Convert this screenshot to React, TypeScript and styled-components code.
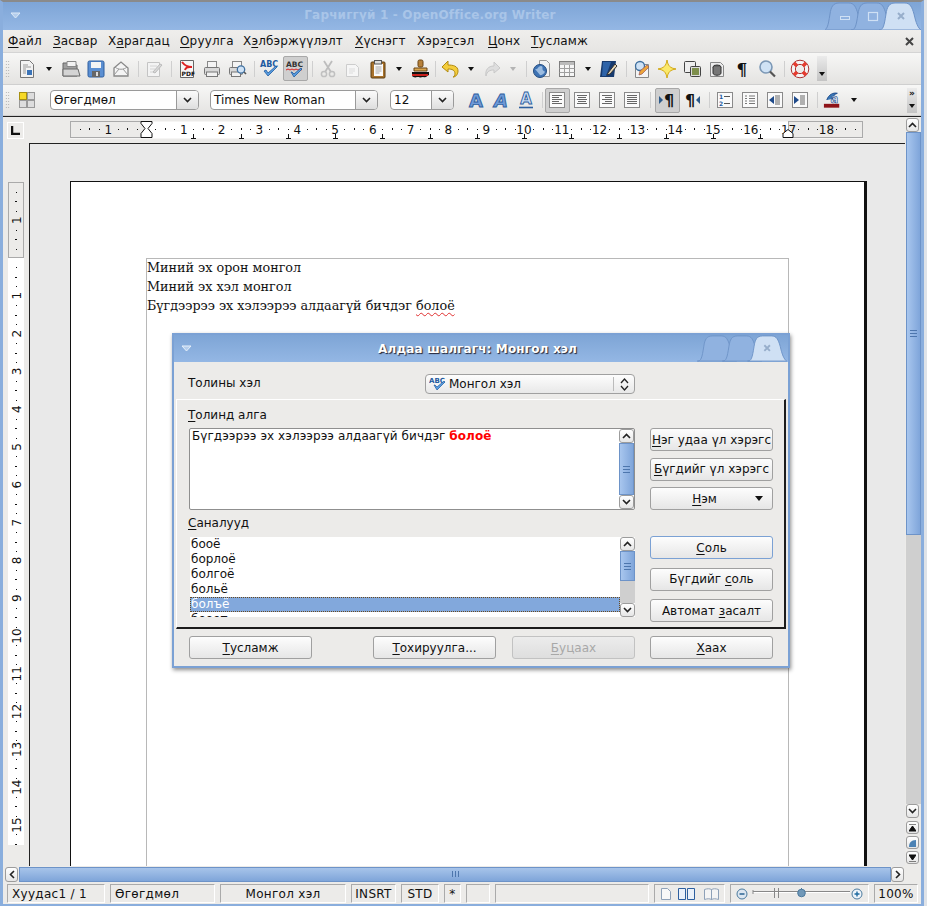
import React from "react";
import styled, { createGlobalStyle } from "styled-components";

const UI = `"DejaVu Sans", Verdana, sans-serif`;

const Global = createGlobalStyle`
    html, body { margin: 0; padding: 0; background: #dfe3e8; }
    #root { width: 927px; height: 906px; overflow: hidden; }
`;

const Screen = styled.div`
    position: relative;
    width: 924px;
    height: 906px;
    box-sizing: border-box;
    border-top: 2px solid #8a8a8a;
    border-left: 3px solid #8aaedd;
    border-right: 3px solid #8aaedd;
    border-bottom: 2px solid #8aaedd;
    display: flex;
    flex-direction: column;
    font-family: ${UI};
    font-size: 12px;
    color: #111;
    background: #ecebe9;
    overflow: visible;
`;

const TitleBar = styled.div<{ $h: number }>`
    position: relative;
    flex: none;
    height: ${p => p.$h}px;
    background: linear-gradient(#7ea5d6, #94b7e4);
    display: flex;
    align-items: center;
    justify-content: center;
`;

const TitleText = styled.div`
    font-size: 12px;
    font-weight: bold;
    color: #a9c5e8;
    letter-spacing: 0.17px;
    margin-right: 64px;
    margin-bottom: 2px;
`;

const DialogTitleText = styled.div`
    font-size: 12px;
    font-weight: bold;
    color: #fff;
    text-shadow: 1px 1px 1px #223;
    letter-spacing: 0.15px;
    margin-right: 7px;
`;

const TitleMenu = styled.svg`
    position: absolute;
    left: 7px;
    top: 10px;
`;

const TitleTabs = styled.svg`
    position: absolute;
    right: 0;
    bottom: 0;
`;

const MenuBar = styled.div`
    flex: none;
    height: 23px;
    display: flex;
    align-items: center;
    padding-left: 5px;
    position: relative;
    background: linear-gradient(#efeeec, #e6e5e3);
    border-bottom: 1px solid #d4d4d4;
    box-sizing: border-box;
`;

const MenuItem = styled.span<{ $w: number }>`
    width: ${p => p.$w}px;
    white-space: nowrap;
    font-size: 12px;
    letter-spacing: 0.15px;
`;

const Key = styled.span`
    text-decoration: underline;
    text-underline-offset: 2px;
    text-decoration-thickness: 1px;
`;

const MenuClose = styled.svg`
    position: absolute;
    right: 7px;
    top: 7px;
`;

const Toolbar = styled.div<{ $h: number }>`
    position: relative;
    flex: none;
    height: ${p => p.$h}px;
    display: flex;
    align-items: center;
    box-sizing: border-box;
    background: linear-gradient(#f7f7f6, #e4e3e1);
    border-bottom: 1px solid #cfcfcf;
`;

const Grip = styled.div`
    width: 5px;
    height: 18px;
    margin: 0 4.5px 0 2px;
    flex: none;
    background-image: radial-gradient(#a8a8a8 0.7px, transparent 0.8px);
    background-size: 2.5px 3px;
`;

const Tool = styled.div<{ $w?: number; $active?: boolean; $ml?: number }>`
    width: ${p => p.$w ?? 25}px;
    height: 25px;
    flex: none;
    margin-left: ${p => p.$ml ?? 0}px;
    display: flex;
    align-items: center;
    justify-content: center;
    box-sizing: border-box;
    border-radius: 2px;
    border: 1px solid ${p => (p.$active ? "#a8a8a8" : "transparent")};
    background: ${p => (p.$active ? "#cfcfcf" : "transparent")};
    font-family: "DejaVu Serif", serif;
    font-weight: bold;
    font-size: 17px;
`;

const Sep = styled.div<{ $w?: number }>`
    width: ${p => p.$w ?? 8}px;
    flex: none;
    height: 16px;
    position: relative;
    &::after {
        content: "";
        position: absolute;
        left: 50%;
        top: 0;
        bottom: 0;
        width: 1px;
        background: #cfcfcf;
    }
`;

const DropArrow = styled.div<{ $faded?: boolean; $size?: number }>`
    width: 0;
    height: 0;
    border-left: ${p => p.$size ?? 3.5}px solid transparent;
    border-right: ${p => p.$size ?? 3.5}px solid transparent;
    border-top: ${p => (p.$size ?? 3.5) + 0.5}px solid ${p => (p.$faded ? "#b4b4b4" : "#111")};
`;

const Overflow = styled.div<{ $left: number; $top: number }>`
    position: absolute;
    left: ${p => p.$left}px;
    top: ${p => p.$top}px;
    width: 10px;
    height: 25px;
    background: linear-gradient(#ebebeb, #c4c4c4);
    display: flex;
    flex-direction: column;
    align-items: center;
    justify-content: flex-end;
    padding-bottom: 5px;
    box-sizing: border-box;
    gap: 6px;
    font-size: 9px;
    font-weight: bold;
`;

const Combo = styled.div<{ $w: number; $ml: number }>`
    width: ${p => p.$w}px;
    margin-left: ${p => p.$ml}px;
    height: 20px;
    flex: none;
    box-sizing: border-box;
    display: flex;
    background: #fff;
    border: 1px solid #9a9a9a;
    border-radius: 4px;
    overflow: hidden;
`;

const ComboText = styled.div`
    flex: 1;
    padding-left: 3px;
    line-height: 18px;
    font-size: 12px;
    white-space: nowrap;
    overflow: hidden;
`;

const ComboButton = styled.div`
    flex: none;
    width: 21px;
    border-left: 1px solid #9a9a9a;
    background: linear-gradient(#fbfbfb, #dedede);
    display: flex;
    align-items: center;
    justify-content: center;
`;

const Workspace = styled.div`
    flex: 1;
    min-height: 0;
    display: flex;
    border-top: 1px solid #222;
    background: #ecebe9;
`;

const WorkMain = styled.div`
    flex: 1;
    min-width: 0;
    display: flex;
    flex-direction: column;
`;

const RulerRow = styled.div`
    flex: none;
    height: 26px;
    display: flex;
    padding-top: 4px;
    box-sizing: border-box;
`;

const TabStopBox = styled.div`
    width: 17px;
    height: 17px;
    margin-left: 4px;
    margin-top: 1px;
    flex: none;
    box-sizing: border-box;
    border: 1px solid #fff;
    background: #ecebe9;
    display: flex;
    align-items: center;
    justify-content: center;
`;

const HRuler = styled.svg`
    margin-left: 46px;
    flex: none;
    overflow: visible;
    font-family: ${UI};
`;

const DocRow = styled.div`
    flex: 1;
    min-height: 0;
    display: flex;
`;

const VRulerCol = styled.div`
    flex: none;
    width: 26px;
    padding: 39px 0 0 5px;
    box-sizing: border-box;
`;

const VRuler = styled.svg`
    display: block;
    overflow: visible;
    font-family: ${UI};
`;

const DocArea = styled.div`
    flex: 1;
    min-width: 0;
    overflow: hidden;
    background: #e9e9e9;
    border-top: 1px solid #222;
    border-left: 1px solid #222;
    padding: 37px 0 0 40px;
`;

const Page = styled.div`
    width: 797px;
    height: 720px;
    box-sizing: border-box;
    background: #fff;
    border: 1px solid #111;
    border-right: 3px solid #111;
    padding: 76px 0 0 75px;
`;

const TextFrame = styled.div`
    width: 643px;
    height: 660px;
    box-sizing: border-box;
    border: 1px solid #b8b8b8;
    border-bottom: 0;
    font-family: "DejaVu Serif", serif;
    font-size: 12.75px;
    line-height: 19px;
    color: #111;
`;

const TextBody = styled.div`
    margin-top: -1px;
`;

const Squiggle = styled.span`
    text-decoration: underline wavy #e03030;
    text-decoration-thickness: 1px;
    text-underline-offset: 2px;
`;

const VScroll = styled.div`
    flex: none;
    width: 16px;
    display: flex;
    flex-direction: column;
    align-items: flex-start;
    padding-top: 1px;
    padding-left: 1px;
    box-sizing: border-box;
`;

const ScrollBtn = styled.div<{ $w?: number; $h?: number; $mt?: number }>`
    flex: none;
    width: ${p => p.$w ?? 13}px;
    height: ${p => p.$h ?? 14}px;
    margin-top: ${p => p.$mt ?? 0}px;
    box-sizing: border-box;
    background: linear-gradient(#fff, #e6e6e6);
    border: 1px solid #9c9c9c;
    border-radius: 3px;
    display: flex;
    align-items: center;
    justify-content: center;
`;

const Thumb = styled.div<{ $h: number }>`
    flex: none;
    width: 100%;
    height: ${p => p.$h}px;
    box-sizing: border-box;
    background: linear-gradient(90deg, #a8c6ee, #7fa5da);
    border: 1px solid #6d93c8;
    display: flex;
    align-items: center;
    justify-content: center;
`;

const Trough = styled.div<{ $h: number }>`
    flex: none;
    width: 100%;
    height: ${p => p.$h}px;
    background: #cfcfcf;
`;

const Grips = styled.div`
    width: 7px;
    height: 7px;
    background: repeating-linear-gradient(#4d76ad 0 1px, transparent 1px 3px);
`;

const HScrollRow = styled.div`
    flex: none;
    height: 16px;
    display: flex;
    align-items: center;
    padding-left: 2px;
    box-sizing: border-box;
`;

const HThumb = styled.div`
    flex: none;
    width: 872px;
    height: 15px;
    margin: 0 0 0 1px;
    box-sizing: border-box;
    background: linear-gradient(#a7c4ea, #7fa5d9);
    border: 1px solid #6d93c8;
    display: flex;
    align-items: center;
    justify-content: center;
`;

const HGrips = styled.div`
    width: 7px;
    height: 6px;
    background: repeating-linear-gradient(90deg, #4d76ad 0 1px, transparent 1px 3px);
`;

const StatusBar = styled.div`
    flex: none;
    height: 22px;
    display: flex;
    align-items: center;
    gap: 5px;
    padding: 1px 0 0 4px;
    box-sizing: border-box;
`;

const StatusCell = styled.div<{ $w: number; $center?: boolean }>`
    width: ${p => p.$w}px;
    height: 19px;
    flex: none;
    box-sizing: border-box;
    border: 1px solid #fff;
    border-top-color: #aaa;
    border-left-color: #aaa;
    display: flex;
    align-items: center;
    justify-content: ${p => (p.$center ? "center" : "flex-start")};
    padding: 0 ${p => (p.$center ? 0 : 4)}px;
    font-size: 12px;
    letter-spacing: 0.3px;
    white-space: nowrap;
`;

/* dialog */
const Dialog = styled.div`
    position: absolute;
    left: 169px;
    top: 331px;
    width: 618px;
    height: 335px;
    box-sizing: border-box;
    border: 2px solid #7ba1d4;
    background: #ecebe9;
    box-shadow: 1px 2px 4px rgba(0, 0, 0, 0.45);
    display: flex;
    flex-direction: column;
`;

const LangRow = styled.div`
    flex: none;
    height: 37px;
    padding-left: 14px;
    display: flex;
    align-items: center;
`;

const LangLabel = styled.div`
    width: 237px;
    margin-top: 5px;
`;

const LangSelect = styled.div`
    width: 210px;
    height: 20px;
    margin-top: 7px;
    box-sizing: border-box;
    background: linear-gradient(#fdfdfd, #e8e8e8);
    border: 1px solid #a0a0a0;
    border-radius: 4px;
    display: flex;
    align-items: center;
    padding-left: 3px;
    gap: 2px;
`;

const SelectArrows = styled.div`
    margin-left: auto;
    width: 20px;
    height: 14px;
    border-left: 1px solid #bbb;
    display: flex;
    align-items: center;
    justify-content: center;
`;

const GroupBox = styled.div`
    flex: none;
    height: 230px;
    margin: 0 2px;
    box-sizing: border-box;
    border-top: 1px solid #fff;
    border-left: 1px solid #fff;
    border-right: 2px solid #1c1c1c;
    border-bottom: 2px solid #1c1c1c;
    padding-left: 12px;
    display: grid;
    grid-template-columns: 446px 123px;
    grid-template-rows: 28px 82px 26px 86px;
    column-gap: 15px;
`;

const GroupLabel = styled.div`
    grid-column: 1 / 3;
    align-self: end;
    padding-bottom: 6px;
    margin-left: -1px;
`;

const ListFrame = styled.div<{ $inset?: boolean }>`
    display: flex;
    box-sizing: border-box;
    background: #fff;
    height: ${p => (p.$inset ? 82 : 80)}px;
    border: ${p => (p.$inset ? "1px solid #8f8f8f" : "0")};
    border-radius: ${p => (p.$inset ? 2 : 0)}px;
    margin: ${p => (p.$inset ? "0" : "1px 0 0 1px")};
    overflow: hidden;
`;

const ListBody = styled.div`
    flex: 1;
    min-width: 0;
    overflow: hidden;
`;

const SentenceText = styled.div`
    padding: 0 0 0 2px;
    line-height: 14px;
    letter-spacing: 0.07px;
    white-space: nowrap;
`;

const Wrong = styled.b`
    color: #f00;
`;

const Row = styled.div<{ $selected?: boolean }>`
    height: 15px;
    line-height: 14px;
    padding-left: 1px;
    box-sizing: border-box;
    color: ${p => (p.$selected ? "#fff" : "#111")};
    background: ${p => (p.$selected ? "#82a8dc" : "transparent")};
    outline: ${p => (p.$selected ? "1px dotted #6b4a1e" : "none")};
    outline-offset: -1px;
`;

const ListScroll = styled.div`
    flex: none;
    width: 15px;
    display: flex;
    flex-direction: column;
`;

const ButtonCol = styled.div`
    display: flex;
    flex-direction: column;
    justify-content: space-between;
`;

const Button = styled.div<{ $focus?: boolean; $off?: boolean; $ml?: number }>`
    width: 123px;
    height: 23px;
    flex: none;
    margin-left: ${p => p.$ml ?? 0}px;
    box-sizing: border-box;
    position: relative;
    border: 1px solid ${p => (p.$focus ? "#7ba1d4" : p.$off ? "#c2c2c2" : "#a0a0a0")};
    border-radius: 3px;
    background: ${p => (p.$off ? "linear-gradient(#ececec, #dedede)" : "linear-gradient(#fdfdfd, #e6e6e6)")};
    color: ${p => (p.$off ? "#a8a8a8" : "#111")};
    display: flex;
    align-items: center;
    justify-content: center;
    line-height: 20px;
    white-space: nowrap;
    overflow: hidden;
`;

const ButtonLabel = styled.span<{ $mr?: number }>`
    margin-right: ${p => p.$mr ?? 0}px;
`;

const ButtonArrow = styled.div`
    position: absolute;
    right: 9px;
    top: 8px;
`;

const Footer = styled.div`
    flex: 1;
    display: flex;
    align-items: flex-start;
    padding: 7px 0 0 15px;
`;

/* icon helpers */
const Chevron = ({ up, c = "#222" }: { up?: boolean; c?: string }) => (
    <svg width="9" height="6" viewBox="0 0 9 6">
        <path d={up ? "M1 5 4.5 1.5 8 5" : "M1 1 4.5 4.5 8 1"} fill="none" stroke={c} strokeWidth="1.6" />
    </svg>
);

const I = ({ children, w = 20, h = 20 }: { children: React.ReactNode; w?: number; h?: number }) => (
    <svg width={w} height={h} viewBox={`0 0 ${w} ${h}`}>{children}</svg>
);

const sheet = "M3.5 1.5h9l4 4v13h-13z";

const icons: Record<string, React.ReactNode> = {
    newDoc: <I><path d={sheet} fill="#f2f2f2" stroke="#777" /><path d="M6 6h5M6 8h8M6 10h3M6 12h3M6 14h3" stroke="#999" /><rect x="10" y="11" width="5" height="5" fill="#3b74b8" /></I>,
    open: <I><path d="M2 4h6l1 2h7v11H2z" fill="#a0a0a0" stroke="#666" /><path d="M6 2.5h9v5H6z" fill="#f2f2f2" stroke="#888" /><path d="M2 10h15l2 7H2z" fill="#d4d4d4" stroke="#6a6a6a" /></I>,
    save: <I><rect x="2" y="2" width="16" height="16" rx="1.5" fill="#5b8fd2" stroke="#2f5f9f" /><rect x="5" y="3" width="10" height="6" fill="#f4f4f4" /><rect x="6" y="12" width="8" height="6" fill="#666" /><rect x="10" y="13" width="2" height="4" fill="#ddd" /></I>,
    mail: <I><path d="M3 9 10 3l7 6v8H3z" fill="#f4f4f4" stroke="#888" strokeWidth="1.3" /><path d="M3 16l5-6M17 16l-5-6M4 8c3 3 9 3 12 0" fill="none" stroke="#999" /></I>,
    edit: <I><path d="M3.5 3.5h12v14h-12z" fill="#f3f3f3" stroke="#c4c4c4" /><path d="M6 7h7M6 10h5M6 13h4" stroke="#d4d4d4" /><path d="M9 13l7-8 2 1-7 8z" fill="#d8d8d8" stroke="#bbb" /></I>,
    pdf: <I><path d="M3.5 1.5h13v17h-13z" fill="#f6f6f6" stroke="#666" /><path d="M5 3c3 4 6 5 10 5-3 0-6-1-7 3" fill="none" stroke="#d22" strokeWidth="2" /><text x="4.5" y="17" fontSize="6" fontWeight="bold" fontFamily="DejaVu Sans" fill="#111">PDF</text></I>,
    print: <I><rect x="5.5" y="2.5" width="9" height="6" fill="#f4f4f4" stroke="#888" /><rect x="2.5" y="8.5" width="15" height="7" rx="1" fill="#d8d8d8" stroke="#777" /><rect x="4.5" y="13" width="11" height="4.5" fill="#f0f0f0" stroke="#777" /></I>,
    preview: <I><rect x="5.5" y="2.5" width="9" height="6" fill="#f4f4f4" stroke="#888" /><rect x="2.5" y="8.5" width="13" height="7" rx="1" fill="#d8d8d8" stroke="#777" /><rect x="4.5" y="13" width="9" height="4.5" fill="#f0f0f0" stroke="#777" /><circle cx="14" cy="10.5" r="3.7" fill="#cfe2f5" stroke="#3e6f9f" strokeWidth="1.3" /><path d="M17 13l2 2" stroke="#555" strokeWidth="1.6" /></I>,
    spell: <I w={22}><text x="1" y="8" fontSize="8" fontWeight="bold" fontFamily="DejaVu Sans" fill="#1e5aa0">ABC</text><path d="M5 12l4 5 9-9-1-1-8 7-2-3z" fill="#5a9ee0" stroke="#1e5aa0" strokeWidth="0.8" /></I>,
    autoSpell: <I w={22}><text x="2" y="8" fontSize="7.5" fontWeight="bold" fontFamily="DejaVu Sans" fill="#333">ABC</text><path d="M2 11l2-1 2 1 2-1 2 1 2-1 2 1 2-1 2 1" fill="none" stroke="#d22" /><path d="M7 13l3 5 8-8-1-1-7 6-2-2z" fill="#5a9ee0" stroke="#1e5aa0" strokeWidth="0.8" /></I>,
    cut: <I><path d="M6 2l7 11M14 2 7 13" stroke="#bdbdbd" strokeWidth="1.8" /><circle cx="6" cy="15" r="2.6" fill="none" stroke="#c0c0c0" strokeWidth="1.5" /><circle cx="14" cy="15" r="2.6" fill="none" stroke="#c0c0c0" strokeWidth="1.5" /></I>,
    copy: <I><path d="M3.5 5.5h9l3 3v9h-12z" fill="#f6f6f6" stroke="#cdcdcd" /><path d="M6 10h6M6 12h6M6 14h4" stroke="#dcdcdc" /></I>,
    paste: <I><rect x="3" y="3" width="14" height="16" rx="1" fill="#a8722c" stroke="#5d3c10" /><path d="M6 5h9v12H6z" fill="#fafafa" /><path d="M7.5 8h6M7.5 10h6M7.5 12h6M7.5 14h4" stroke="#aaa" /><rect x="6.5" y="1.5" width="7" height="3.5" fill="#ddd" stroke="#555" /></I>,
    brush: <I><rect x="8" y="1" width="5" height="7" rx="1.5" fill="#b7813b" stroke="#6a4514" /><path d="M4 9h13v3H4z" fill="#d9a650" stroke="#6a4514" /><path d="M2 13h17v3c-3 1-2 3-6 2-3 1-5 0-6 0-2 1-4 0-5-1z" fill="#111" /><path d="M2 15h16v2H2z" fill="#c8201c" /></I>,
    undo: <I><path d="M8 2 2 8l6 5V10c4 0 7 1 7 5 0 1-1 3-2 3 3 0 5-3 5-6 0-5-5-6-10-6z" fill="#f4cd3c" stroke="#b18a10" /></I>,
    redo: <I><path d="M12 3l6 6-6 5v-3c-4 0-7 1-8 6-1-6 2-10 8-10z" fill="#dedede" stroke="#c8c8c8" /></I>,
    globe: <I><path d="M7.5 1.5h7l3 3v13h-10z" fill="#f2f2f2" stroke="#999" /><circle cx="8" cy="12" r="6.5" fill="#3e73b4" stroke="#234c80" /><path d="M3 10c3 1 3-3 6-3s0 4 3 5-3 5-4 4" fill="#9cbce0" /></I>,
    table: <I w={21}><rect x="2.5" y="2.5" width="15" height="15" fill="#f6f6f6" stroke="#7e7e7e" /><rect x="3" y="3" width="14" height="3" fill="#bbb" /><path d="M2.5 9.5h15M2.5 13.5h15M7.5 6v11M12.5 6v11" stroke="#a0a0a0" /></I>,
    draw: <I><path d="M3 2h14l-2 16H1z" fill="#173a6e" /><path d="M4 3h8L7 17H3z" fill="#2e63a8" /><path d="M9 14 16 5l2 2-7 8-3 1z" fill="#e8d8b8" stroke="#333" /></I>,
    find: <I><path d="M3.5 5.5h13v13h-13z" fill="#f4f4f4" stroke="#888" /><circle cx="8" cy="7" r="4.5" fill="#cfe2f5" stroke="#3e6f9f" strokeWidth="1.3" /><path d="M8 12 15 6l2 2-7 7-3 1z" fill="#eda53a" stroke="#955" strokeWidth="0.7" /></I>,
    star: <I w={22}><path d="M11 1c1 6 3 8 9 9-6 1-8 3-9 9-1-6-3-8-9-9 6-1 8-3 9-9z" fill="#fbe96a" stroke="#d2a815" /></I>,
    gallery: <I><rect x="2.5" y="2.5" width="11" height="11" rx="1" fill="#eee" stroke="#444" /><rect x="8.5" y="7.5" width="10" height="10" rx="1" fill="#ddd" stroke="#444" /><rect x="10" y="9" width="7" height="7" fill="#7e8f4c" /></I>,
    data: <I><path d="M3.5 3.5h10l3 3v11h-13z" fill="#ededed" stroke="#888" /><ellipse cx="10" cy="8" rx="4" ry="2" fill="#666" stroke="#333" /><path d="M6 8v6c0 3 8 3 8 0V8" fill="#777" stroke="#333" /></I>,
    zoom: <I><circle cx="9" cy="8" r="6" fill="#cfe2f5" stroke="#7c98b6" strokeWidth="1.6" /><path d="M13 12.500l5 5" stroke="#555" strokeWidth="2.2" /></I>,
    help: <I><circle cx="10" cy="10" r="7" fill="none" stroke="#f4f4f4" strokeWidth="4.500" /><circle cx="10" cy="10" r="8.800" fill="none" stroke="#a33" /><circle cx="10" cy="10" r="4.600" fill="none" stroke="#a33" /><path d="M4 4l3 3M16 4l-3 3M4 16l3-3M16 16l-3-3" stroke="#e63b2e" strokeWidth="3.500" /></I>,
    styles: <I w={16} h={16}><rect x="0.500" y="0.500" width="7" height="7" fill="#f7d928" stroke="#a79010" /><rect x="8.500" y="0.500" width="7" height="7" fill="#ddd" stroke="#999" /><rect x="0.500" y="8.500" width="7" height="7" fill="#ddd" stroke="#999" /><rect x="8.500" y="8.500" width="7" height="7" fill="#ddd" stroke="#999" /></I>,
    langSpell: <I w={18} h={16}><text x="0" y="7" fontSize="7" fontWeight="bold" fontFamily="DejaVu Sans" fill="#1e5aa0">ABC</text><path d="M5 9l3 5 8-8-1-1-7 6-2-2z" fill="#5a9ee0" stroke="#1e5aa0" strokeWidth="0.7" /></I>
};

const Letter = ({ slant, under }: { slant?: boolean; under?: boolean }) => (
    <I>
        <text x="10" y={under ? 14 : 17} textAnchor="middle" fontSize={under ? 15 : 18} fontWeight="bold" fontFamily="DejaVu Sans"
            fontStyle={slant ? "italic" : "normal"} fill={under ? "#cfe0f6" : "#6f9ad8"} stroke="#2d5f9f" strokeWidth="0.9">A</text>
        {under && <path d="M3 17.500h14" stroke="#2d5f9f" strokeWidth="1.600" />}
    </I>
);

const Align = ({ lines }: { lines: [number, number][] }) => (
    <I>
        <rect x="2.500" y="2.500" width="15" height="15" fill="#fafafa" stroke="#8a8a8a" />
        {lines.map(([x, w], i) => <rect key={i} x={x} y={5 + i * 2} width={w} height="1" fill="#666" />)}
    </I>
);

const ListIcon = ({ kind }: { kind: "num" | "bul" | "out" | "in" }) => (
    <I>
        <rect x="2.500" y="2.500" width="15" height="15" fill="#fafafa" stroke="#8a8a8a" />
        {kind === "num" && <><text x="4" y="9" fontSize="6" fontWeight="bold" fontFamily="DejaVu Sans" fill="#1e5aa0">1</text><text x="4" y="16" fontSize="6" fontWeight="bold" fontFamily="DejaVu Sans" fill="#1e5aa0">2</text><path d="M9 6.500h6M9 13.500h6" stroke="#555" /></>}
        {kind === "bul" && <path d="M5 6h2M9 6h6M5 8.500h2M9 8.500h6M5 11h2M9 11h6M5 13.500h2M9 13.500h6" stroke="#777" />}
        {kind === "out" && <><path d="M9 6v8L4 10z" fill="#1e4a8a" /><path d="M10 6h5M10 8h5M10 10h5M10 12h5M10 14h5" stroke="#666" /></>}
        {kind === "in" && <><path d="M4 6v8l5-4z" fill="#1e4a8a" /><path d="M10 6h5M10 8h5M10 10h5M10 12h5M10 14h5" stroke="#666" /></>}
    </I>
);

const Pilcrow = ({ flip }: { flip?: boolean }) => (
    <I>
        <text x={flip ? 8 : 12} y="16" textAnchor="middle" fontSize="16" fontWeight="bold" fontFamily="DejaVu Sans" fill="#111">¶</text>
        <path d={flip ? "M18 6v8l-4-4z" : "M2 6v8l4-4z"} fill="#2d5a8a" />
    </I>
);

const BgColor = () => (
    <I w={24}>
        <path d="M5 10c2-6 7-8 11-7-3 1-5 3-5 6" fill="#3a78b8" stroke="#1e4a8a" />
        <text x="13" y="13" textAnchor="middle" fontSize="12" fontWeight="bold" fontFamily="DejaVu Sans" fill="#dfe9f5" stroke="#1e4a8a" strokeWidth="0.6">a</text>
        <rect x="2" y="14" width="16" height="4" fill="#8f1318" />
    </I>
);

const Drop = ({ faded, w = 17 }: { faded?: boolean; w?: number }) => <Tool $w={w}><DropArrow $faded={faded} /></Tool>;

const HorizontalRuler = () => {
    const step = 37.8;
    const origin = 76;
    const marks: React.ReactNode[] = [];
    for (let k = -2; k <= 19; k++) {
        for (let q = 1; q < 4; q++) {
            const x = origin + (k + q / 4) * step;
            if (x < 4 || x > 788) continue;
            marks.push(<rect key={`${k}-${q}`} x={Math.round(x)} y={q === 2 ? 7 : 8} width="1" height={q === 2 ? 2 : 1} fill="#111" />);
        }
    }
    const labels = [-1, 1, 2, 3, 4, 5, 6, 7, 8, 9, 10, 11, 12, 13, 14, 15, 16, 17, 18];
    const tabs = Array.from({ length: 13 }, (_, i) => origin + (i + 1) * 47.25);
    return (
        <HRuler width="793" height="18" viewBox="0 0 793 18">
            <rect x="0" y="0.500" width="793" height="17" fill="#fff" />
            <rect x="0.500" y="0.500" width="76" height="16" fill="#ecebe9" stroke="#aaa" />
            <rect x="718.500" y="0.500" width="74" height="16" fill="#ecebe9" stroke="#aaa" />
            {marks}
            {labels.map(n => (
                <text key={n} x={origin + n * step} y="13" textAnchor="middle" fontSize="12" fill="#111">{Math.abs(n)}</text>
            ))}
            {tabs.map(x => <path key={x} d={`M${Math.round(x)}.5 13v4M${Math.round(x) - 2} 17.500h5`} stroke="#111" fill="none" />)}
            <path d="M71 0.500h11v2l-4 5 4 5v4H71v-4l4-5-4-5z" fill="#fff" stroke="#111" />
            <path d="M713 16.500v-4l5-4 5 4v4z" fill="#fff" stroke="#111" />
        </HRuler>
    );
};

const VerticalRuler = () => {
    const step = 37.8;
    const origin = 76;
    const marks: React.ReactNode[] = [];
    for (let k = -2; k <= 16; k++) {
        for (let q = 1; q < 4; q++) {
            const y = origin + (k + q / 4) * step;
            if (y < 4 || y > 662) continue;
            marks.push(<rect key={`${k}-${q}`} x={q === 2 ? 7 : 8} y={Math.round(y)} width={q === 2 ? 2 : 1} height="1" fill="#111" />);
        }
    }
    const labels = [-1, 1, 2, 3, 4, 5, 6, 7, 8, 9, 10, 11, 12, 13, 14, 15];
    return (
        <VRuler width="16" height="663" viewBox="0 0 16 663">
            <rect x="0" y="0" width="16" height="663" fill="#fff" />
            <rect x="0.500" y="0.500" width="15" height="75" fill="#ecebe9" stroke="#aaa" />
            {marks}
            {labels.map(n => {
                const y = origin + n * step;
                return <text key={n} transform={`translate(12.500 ${y}) rotate(-90)`} textAnchor="middle" fontSize="12" fill="#111">{Math.abs(n)}</text>;
            })}
        </VRuler>
    );
};

const Tab = ({ x, light }: { x: number; light?: boolean }) => (
    <path
        d={`M${x} 29c4 0 5-3 7-16 1-7 3-11 9-11h10c5 0 7 4 9 11 2 9 4 14 7 16z`}
        transform="translate(0 -1)"
        fill={light ? "#cfe0f4" : "#90b2e0"}
        stroke="#6e93c7"
    />
);

const ListArrows = ({ thumb, trough }: { thumb: number; trough: number }) => (
    <ListScroll>
        <ScrollBtn $w={15}><Chevron up /></ScrollBtn>
        <Thumb $h={thumb}><Grips /></Thumb>
        {trough > 0 && <Trough $h={trough} />}
        <ScrollBtn $w={15}><Chevron /></ScrollBtn>
    </ListScroll>
);

const menu: [string, string, string, number][] = [
    ["", "Ф", "айл", 45],
    ["", "З", "асвар", 55],
    ["Х", "а", "рагдац", 72],
    ["", "О", "руулга", 63],
    ["Х", "э", "лбэржүүлэлт", 112],
    ["", "Х", "үснэгт", 62],
    ["Хэрэ", "г", "сэл", 71],
    ["", "Ц", "онх", 43],
    ["", "Т", "усламж", 60]
];

export default function App() {
    return (
        <Screen>
            <Global />
            <TitleBar $h={28}>
                <TitleMenu width="12" height="8" viewBox="0 0 12 8">
                    <path d="M1 1h9L5.500 6z" fill="#b4cdec" stroke="#dce9f7" />
                </TitleMenu>
                <TitleText>Гарчиггүй 1 - OpenOffice.org Writer</TitleText>
                <TitleTabs width="96" height="28" viewBox="0 0 96 28">
                    <Tab x={-2} />
                    <Tab x={26} />
                    <Tab x={54} light />
                    <rect x="15.500" y="14.500" width="9" height="3" fill="none" stroke="#cfe0f4" />
                    <rect x="43.500" y="10.500" width="9" height="8" fill="none" stroke="#cfe0f4" strokeWidth="1.200" />
                    <path d="M73 11l6 6M79 11l-6 6" stroke="#97aecb" strokeWidth="2" />
                </TitleTabs>
            </TitleBar>

            <MenuBar>
                {menu.map(([a, k, b, w]) => (
                    <MenuItem key={a + k + b} $w={w}>{a}<Key>{k}</Key>{b}</MenuItem>
                ))}
                <MenuClose width="9" height="9" viewBox="0 0 9 9">
                    <path d="M1 1l7 7M8 1 1 8" stroke="#444" strokeWidth="2" />
                </MenuClose>
            </MenuBar>

            <Toolbar $h={32}>
                <Grip />
                <Tool>{icons.newDoc}</Tool>
                <Drop w={19} />
                <Tool>{icons.open}</Tool>
                <Tool>{icons.save}</Tool>
                <Tool>{icons.mail}</Tool>
                <Sep />
                <Tool>{icons.edit}</Tool>
                <Sep />
                <Tool>{icons.pdf}</Tool>
                <Tool>{icons.print}</Tool>
                <Tool>{icons.preview}</Tool>
                <Sep />
                <Tool>{icons.spell}</Tool>
                <Tool $active>{icons.autoSpell}</Tool>
                <Sep />
                <Tool>{icons.cut}</Tool>
                <Tool>{icons.copy}</Tool>
                <Tool>{icons.paste}</Tool>
                <Drop />
                <Tool>{icons.brush}</Tool>
                <Sep $w={5} />
                <Tool>{icons.undo}</Tool>
                <Drop />
                <Tool>{icons.redo}</Tool>
                <Drop faded />
                <Sep />
                <Tool>{icons.globe}</Tool>
                <Tool>{icons.table}</Tool>
                <Drop />
                <Tool>{icons.draw}</Tool>
                <Sep />
                <Tool>{icons.find}</Tool>
                <Tool>{icons.star}</Tool>
                <Tool>{icons.gallery}</Tool>
                <Tool>{icons.data}</Tool>
                <Tool>¶</Tool>
                <Tool>{icons.zoom}</Tool>
                <Sep />
                <Tool>{icons.help}</Tool>
                <Overflow $left={814} $top={3}><DropArrow /></Overflow>
            </Toolbar>

            <Toolbar $h={31}>
                <Grip />
                <Tool>{icons.styles}</Tool>
                <Combo $w={149} $ml={10.5}><ComboText>Өгөгдмөл</ComboText><ComboButton><Chevron /></ComboButton></Combo>
                <Combo $w={168} $ml={11}><ComboText>Times New Roman</ComboText><ComboButton><Chevron /></ComboButton></Combo>
                <Combo $w={64} $ml={12}><ComboText>12</ComboText><ComboButton><Chevron /></ComboButton></Combo>
                <Tool $ml={9.5}><Letter /></Tool>
                <Tool><Letter slant /></Tool>
                <Tool><Letter under /></Tool>
                <Sep $w={6} />
                <Tool $active><Align lines={[[5, 10], [5, 7], [5, 10], [5, 7], [5, 10]]} /></Tool>
                <Tool><Align lines={[[5, 10], [6, 8], [5, 10], [6, 8], [5, 10]]} /></Tool>
                <Tool><Align lines={[[5, 10], [8, 7], [5, 10], [8, 7], [5, 10]]} /></Tool>
                <Tool><Align lines={[[5, 10], [5, 10], [5, 10], [5, 10], [5, 10]]} /></Tool>
                <Sep $w={10} />
                <Tool $active><Pilcrow /></Tool>
                <Tool><Pilcrow flip /></Tool>
                <Sep />
                <Tool><ListIcon kind="num" /></Tool>
                <Tool><ListIcon kind="bul" /></Tool>
                <Tool><ListIcon kind="out" /></Tool>
                <Tool><ListIcon kind="in" /></Tool>
                <Sep />
                <Tool><BgColor /></Tool>
                <Drop />
                <Overflow $left={904} $top={3}>
                    <span>»</span>
                    <DropArrow />
                </Overflow>
            </Toolbar>

            <Workspace>
                <WorkMain>
                    <RulerRow>
                        <TabStopBox>
                            <svg width="9" height="9" viewBox="0 0 9 9"><path d="M1 0v8h8" fill="none" stroke="#111" strokeWidth="2.500" /></svg>
                        </TabStopBox>
                        <HorizontalRuler />
                    </RulerRow>
                    <DocRow>
                        <VRulerCol><VerticalRuler /></VRulerCol>
                        <DocArea>
                            <Page>
                                <TextFrame>
                                    <TextBody>
                                        <div>Миний эх орон монгол</div>
                                        <div>Миний эх хэл монгол</div>
                                        <div>Бүгдээрээ эх хэлээрээ алдаагүй бичдэг <Squiggle>болоё</Squiggle></div>
                                    </TextBody>
                                </TextFrame>
                            </Page>
                        </DocArea>
                    </DocRow>
                </WorkMain>
                <VScroll>
                    <ScrollBtn><Chevron up /></ScrollBtn>
                    <Thumb $h={403}><Grips /></Thumb>
                    <Trough $h={269} />
                    <ScrollBtn><Chevron /></ScrollBtn>
                    <ScrollBtn $h={13} $mt={3}>
                        <svg width="7" height="8" viewBox="0 0 7 8"><path d="M0 0h7M3.500 2 7 7H0z" stroke="#111" fill="#111" /></svg>
                    </ScrollBtn>
                    <ScrollBtn $h={13} $mt={2}>
                        <svg width="9" height="8" viewBox="0 0 9 8"><path d="M1 8c0-4 2-7 7-7v7z" fill="#4c82b4" /></svg>
                    </ScrollBtn>
                    <ScrollBtn $h={13} $mt={2}>
                        <svg width="7" height="8" viewBox="0 0 7 8"><path d="M0 8h7M3.500 6 7 1H0z" stroke="#111" fill="#111" /></svg>
                    </ScrollBtn>
                </VScroll>
            </Workspace>

            <HScrollRow>
                <ScrollBtn $h={15}><svg width="6" height="9" viewBox="0 0 6 9"><path d="M5 1 1.500 4.500 5 8" fill="none" stroke="#222" strokeWidth="1.600" /></svg></ScrollBtn>
                <HThumb><HGrips /></HThumb>
                <ScrollBtn $h={15}><svg width="6" height="9" viewBox="0 0 6 9"><path d="M1 1l3.500 3.500L1 8" fill="none" stroke="#222" strokeWidth="1.600" /></svg></ScrollBtn>
            </HScrollRow>

            <StatusBar>
                <StatusCell $w={98}>Хуудас1 / 1</StatusCell>
                <StatusCell $w={105}>Өгөгдмөл</StatusCell>
                <StatusCell $w={126} $center>Монгол хэл</StatusCell>
                <StatusCell $w={45} $center>INSRT</StatusCell>
                <StatusCell $w={38} $center>STD</StatusCell>
                <StatusCell $w={17} $center>*</StatusCell>
                <StatusCell $w={24} />
                <StatusCell $w={154} />
                <StatusCell $w={71} $center>
                    <svg width="60" height="13" viewBox="0 0 60 13">
                        <path d="M1.500 1.500h6l3 3v8h-9z" fill="#f8f8f8" stroke="#8ea1b8" />
                        <path d="M18.500 1.500h7v11h-7zM27.500 1.500h7v11h-7z" fill="#eaf1fa" stroke="#2d5f9f" />
                        <path d="M44.500 2.500c3-1 5-1 7 0v10c-2-1-4-1-7 0zM51.500 2.500c2-1 4-1 7 0v10c-3-1-5-1-7 0z" fill="#f4f4f4" stroke="#8ea1b8" />
                    </svg>
                </StatusCell>
                <StatusCell $w={139} $center>
                    <svg width="130" height="15" viewBox="0 0 130 15">
                        <circle cx="7" cy="8" r="5" fill="#dce6f0" stroke="#4b7a9e" />
                        <path d="M4.500 8h5" stroke="#1e5a8a" strokeWidth="1.400" />
                        <path d="M18 5.500h97" stroke="#888" />
                        <path d="M18 6.500h97" stroke="#fff" />
                        <path d="M18 4v4M39.500 2v10M43.500 2v10" stroke="#888" />
                        <path d="M66.500 2v3" stroke="#4b7a9e" />
                        <circle cx="66.500" cy="7" r="3.800" fill="#7098b8" stroke="#4b7a9e" />
                        <circle cx="122" cy="8" r="5" fill="#eef4fa" stroke="#4b7a9e" />
                        <path d="M119.500 8h5M122 5.500v5" stroke="#1e6aa0" strokeWidth="1.400" />
                    </svg>
                </StatusCell>
                <StatusCell $w={44} $center>100%</StatusCell>
            </StatusBar>

            <Dialog>
                <TitleBar $h={27}>
                    <TitleMenu width="12" height="8" viewBox="0 0 12 8">
                        <path d="M1 1h9L5.500 6z" fill="#b4cdec" stroke="#e6f0fa" />
                    </TitleMenu>
                    <DialogTitleText>Алдаа шалгагч: Монгол хэл</DialogTitleText>
                    <TitleTabs width="92" height="27" viewBox="0 0 92 29">
                        <Tab x={-2} />
                        <Tab x={25} />
                        <Tab x={52} light />
                        <path d="M70 11l6 6M76 11l-6 6" stroke="#97aecb" strokeWidth="2" />
                    </TitleTabs>
                </TitleBar>
                <LangRow>
                    <LangLabel>Толины хэл</LangLabel>
                    <LangSelect>
                        {icons.langSpell}
                        <span>Монгол хэл</span>
                        <SelectArrows>
                            <svg width="9" height="13" viewBox="0 0 9 13"><path d="M1 5l3.500-4L8 5M1 8l3.500 4L8 8" fill="none" stroke="#222" strokeWidth="1.300" /></svg>
                        </SelectArrows>
                    </LangSelect>
                </LangRow>
                <GroupBox>
                    <GroupLabel><Key>Т</Key>олинд алга</GroupLabel>
                    <ListFrame $inset>
                        <ListBody>
                            <SentenceText>Бүгдээрээ эх хэлээрээ алдаагүй бичдэг <Wrong>болоё</Wrong></SentenceText>
                        </ListBody>
                        <ListArrows thumb={52} trough={0} />
                    </ListFrame>
                    <ButtonCol>
                        <Button><ButtonLabel><Key>Н</Key>эг удаа үл хэрэгс</ButtonLabel></Button>
                        <Button><ButtonLabel><Key>Б</Key>үгдийг үл хэрэгс</ButtonLabel></Button>
                        <Button><ButtonLabel $mr={14}><Key>Н</Key>эм</ButtonLabel><ButtonArrow><DropArrow $size={4.500} /></ButtonArrow></Button>
                    </ButtonCol>
                    <GroupLabel><Key>С</Key>аналууд</GroupLabel>
                    <ListFrame>
                        <ListBody>
                            <Row>бооё</Row>
                            <Row>борлоё</Row>
                            <Row>болгоё</Row>
                            <Row>больё</Row>
                            <Row $selected>болъё</Row>
                            <Row>бооет</Row>
                        </ListBody>
                        <ListArrows thumb={30} trough={22} />
                    </ListFrame>
                    <ButtonCol>
                        <Button $focus><ButtonLabel><Key>С</Key>оль</ButtonLabel></Button>
                        <Button><ButtonLabel>Бүгдийг <Key>с</Key>оль</ButtonLabel></Button>
                        <Button><ButtonLabel>Автомат <Key>з</Key>асалт</ButtonLabel></Button>
                    </ButtonCol>
                </GroupBox>
                <Footer>
                    <Button><ButtonLabel><Key>Т</Key>усламж</ButtonLabel></Button>
                    <Button $ml={61}><ButtonLabel><Key>Т</Key>охируулга...</ButtonLabel></Button>
                    <Button $ml={16} $off><ButtonLabel><Key>Б</Key>уцаах</ButtonLabel></Button>
                    <Button $ml={15}><ButtonLabel><Key>Х</Key>аах</ButtonLabel></Button>
                </Footer>
            </Dialog>
        </Screen>
    );
}
